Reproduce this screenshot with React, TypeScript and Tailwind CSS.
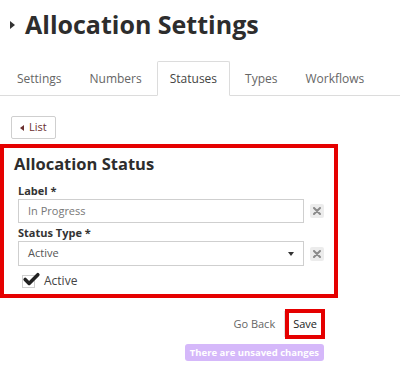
import { Check } from "lucide-react";

const tabs = ["Settings", "Numbers", "Statuses", "Types", "Workflows"];

function ClearButton() {
    return (
        <button className="flex h-[14px] w-[14px] shrink-0 items-center justify-center rounded-[2px] bg-[#ececec]">
            <svg width="8" height="8" viewBox="0 0 8 8">
                <path d="M1 1 L7 7 M7 1 L1 7" stroke="#8a8a8a" strokeWidth="2" strokeLinecap="round" />
            </svg>
        </button>
    );
}

export default function App() {
    return (
        <main
            className="h-[382px] w-[400px] overflow-hidden bg-white text-[#333]"
            style={{ fontFamily: "'Open Sans', 'Liberation Sans', sans-serif" }}
        >
            {/* Page title */}
            <div className="flex items-center pl-[10px] pt-[6px]">
                <span className="mr-[10px] h-0 w-0 border-y-[4px] border-l-[5px] border-y-transparent border-l-[#333]" />
                <h1 className="text-[25px] font-bold leading-[37px] text-[#2d2d2d]">
                    Allocation Settings
                </h1>
            </div>

            {/* Tabs */}
            <div className="mt-[18px] flex gap-[2px] border-b border-[#dcdcdc] pl-[4px]">
                {tabs.map((tab) => (
                    <div
                        key={tab}
                        className={`-mb-px px-[12px] text-[12px] leading-[33px] ${
                            tab === "Statuses"
                                ? "rounded-t-[2px] border border-b-white border-[#dcdcdc] text-[#444]"
                                : "border border-transparent text-[#666]"
                        }`}
                    >
                        {tab}
                    </div>
                ))}
            </div>

            {/* Back to list */}
            <div className="px-[11px] pt-[20px]">
                <button className="flex h-[23px] items-center gap-[5px] rounded-[2px] border border-[#cfcfcf] px-[8px] text-[11px] text-[#6b2f2f]">
                    <span className="h-0 w-0 border-y-[3px] border-r-[4px] border-y-transparent border-r-[#6b2f2f]" />
                    List
                </button>
            </div>

            {/* Status card */}
            <section className="mt-[5px] w-[338px] border-[4px] border-[#e50000] px-[10px] pb-[3px] pt-[3px]">
                <h2 className="text-[16.5px] font-bold leading-[26px] text-[#2d2d2d]">Allocation Status</h2>

                <div className="mt-[7px] pl-[4px]">
                    <label className="block text-[11px] font-bold leading-[14px] text-[#333]">Label *</label>
                    <div className="mt-[1px] flex items-center gap-[6px]">
                        <div className="flex h-[24px] flex-1 items-center border border-[#cfcfcf] px-[9px] text-[11px] text-[#777]">
                            In Progress
                        </div>
                        <ClearButton />
                    </div>

                    <label className="mt-[3px] block text-[11px] font-bold leading-[14px] text-[#333]">Status Type *</label>
                    <div className="mt-[1px] flex items-center gap-[6px]">
                        <div className="flex h-[25px] flex-1 items-center justify-between border border-[#cfcfcf] px-[9px] text-[11px] text-[#555]">
                            Active
                            <span className="h-0 w-0 border-x-[3px] border-t-[4px] border-x-transparent border-t-[#333]" />
                        </div>
                        <ClearButton />
                    </div>

                    <div className="mt-[5px] flex items-center gap-[9px] pl-[4px]">
                        <span className="relative flex h-[13px] w-[13px] items-center justify-center border border-[#cfcfcf]">
                            <Check className="absolute -top-[6px] -left-[1px]" size={19} strokeWidth={4.5} color="#222" />
                        </span>
                        <span className="text-[12px] leading-[20px] text-[#444]">Active</span>
                    </div>
                </div>
            </section>

            {/* Footer actions */}
            <div className="mt-[11px] flex w-[325px] flex-col items-end">
                <div className="flex items-center">
                    <button className="px-[9px] text-[11px] text-[#666]">Go Back</button>
                    <div className="h-[26px] w-px bg-[#e0e0e0]" />
                    <button className="h-[30px] border-[4px] border-[#e50000] px-[4px] text-[11px] text-[#222]">Save</button>
                </div>
                <div className="mr-[1px] mt-[5px] rounded-[3px] bg-[#d5b8fa] px-[5px] text-[9.5px] font-bold leading-[17px] text-white">
                    There are unsaved changes
                </div>
            </div>
        </main>
    );
}
